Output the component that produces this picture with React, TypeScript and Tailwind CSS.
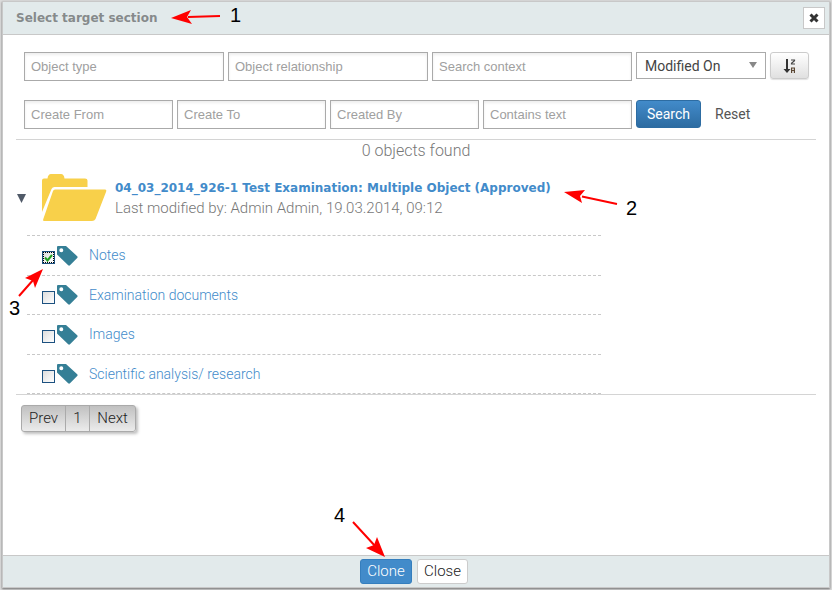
import { useState } from "react";

const sections = ["Notes", "Examination documents", "Images", "Scientific analysis/ research"];

function Field({ label }: { label: string }) {
  return (
    <input
      type="text"
      aria-label={label}
      placeholder={label}
      className="h-[29px] min-w-0 flex-1 border border-[#aaa] bg-white px-1.5 font-['Liberation_Sans',Arial,sans-serif] text-[13px] text-[#555] shadow-[inset_0_2px_3px_rgba(0,0,0,0.07)] outline-none placeholder:text-[#a0a0a0]"
    />
  );
}

function SortIcon() {
  return (
    <svg width="14" height="14" viewBox="0 0 14 14" fill="none" aria-hidden="true">
      <path d="M4 0v11" stroke="#333" strokeWidth="2" />
      <path d="M0.500 10h7L4 14z" fill="#333" />
      <path d="M8 1h3.500v.7L8.500 4.300v.7H12" stroke="#444" strokeWidth="1.200" />
      <path d="M8.600 14V9h2.800v5M8.600 11.500h2.800" stroke="#5a4632" strokeWidth="1.200" />
    </svg>
  );
}

function FolderIcon() {
  return (
    <svg width="65" height="48" viewBox="0 0 65 48" fill="#f8d04a" className="shrink-0" aria-hidden="true">
      <path d="M0 38V6.500q0-2 2-2H5.500Q6 0 9 0h10q3 0 3.500 4.500H43q2.500 0 2.500 2V13H12.500q-2 0-3 2z" />
      <path d="M13 15.500h50q2 0 1 2.500L53.500 45q-1 2-3.500 2H2.500q-2 0-1.200-2L11 17q.5-1.500 2-1.500z" />
    </svg>
  );
}

function TagIcon() {
  return (
    <svg width="21" height="20" viewBox="0 0 21 20" className="shrink-0" aria-hidden="true">
      <path fillRule="evenodd" fill="#357f96" d="M0 1Q0 0 1 0H9l11.200 10.200q.9.900 0 1.800L13 19.300q-.9.900-1.800 0L0 8.500zM4.300 2.300a2 2 0 1 0 0 4 2 2 0 0 0 0-4z" />
    </svg>
  );
}

function Annotations() {
  return (
    <svg
      width="832"
      height="590"
      viewBox="0 0 832 590"
      className="pointer-events-none absolute top-0 left-0 font-['Liberation_Sans',Arial,sans-serif] text-[20px]"
    >
      <g stroke="#f00" strokeWidth="2" fill="none">
        <path d="M220 16L188 17M617 204L582 196.500M19 296L34 279M353 522L376 547" />
      </g>
      <g fill="#f00">
        <path d="M171 18l20-8-4 7 5 7z" />
        <path d="M564 192l21-2-5 6 2 7z" />
        <path d="M43 269l-8 19-2-7-8-3z" />
        <path d="M385 557l-19-9 8-3 3-8z" />
      </g>
      <g fill="#000">
        <text x="230" y="22">1</text>
        <text x="626" y="215">2</text>
        <text x="9" y="315">3</text>
        <text x="334" y="522">4</text>
      </g>
    </svg>
  );
}

export default function App() {
  const [checked, setChecked] = useState<boolean[]>([true, false, false, false]);
  const toggle = (index: number) => setChecked(checked.map((value, i) => (i === index ? !value : value)));

  return (
    <div className="relative flex min-h-screen flex-col bg-[#dcdcdc] px-0.5 pt-px pb-0.5 font-[Roboto,'Liberation_Sans',sans-serif]">
      <section
        role="dialog"
        aria-labelledby="dialog-title"
        className="flex flex-1 flex-col border border-[#c8c8c8] bg-white shadow-[0_1px_2px_rgba(0,0,0,0.5)]"
      >
        <header className="flex h-[33px] items-center justify-between border-b border-[#c8c8c8] bg-[#e2eaeb] pr-1 pl-[13px]">
          <h1 id="dialog-title" className="font-['DejaVu_Sans',Verdana,sans-serif] text-[12px] font-bold text-[#868a8b]">
            Select target section
          </h1>
          <button type="button" aria-label="Close dialog" className="flex size-[22px] items-center justify-center border border-[#c8c8c8] bg-white">
            <svg width="10" height="10" viewBox="0 0 10 10" aria-hidden="true">
              <path d="M1.500 1.500l7 7m0-7l-7 7" stroke="#333" strokeWidth="3" />
            </svg>
          </button>
        </header>

        <main className="flex-1 px-[13px]">
          <form className="pt-[17px] pr-[7px] pl-2" onSubmit={(e) => e.preventDefault()}>
            <div className="flex gap-1">
              <div className="flex min-w-0 flex-1 gap-1">
                <Field label="Object type" />
                <Field label="Object relationship" />
                <Field label="Search context" />
              </div>
              <div className="flex w-[173px] shrink-0 gap-1">
                <div className="relative h-[27px] w-[130px]">
                  <select aria-label="Sort by" className="h-full w-full appearance-none border border-[#aaa] bg-white pt-0.5 pl-2 text-[14px] text-[#444]">
                    <option>Modified On</option>
                  </select>
                  <svg width="8" height="6" viewBox="0 0 8 6" className="pointer-events-none absolute top-2.5 right-[9px]" aria-hidden="true">
                    <path d="M0 0h8L4 6z" fill="#888" />
                  </svg>
                </div>
                <button
                  type="button"
                  aria-label="Sort descending"
                  className="flex h-[27px] flex-1 items-center justify-center rounded-[3px] border border-[#ccc] bg-linear-to-b from-white to-[#e0e0e0] shadow-[0_1px_1px_rgba(0,0,0,0.12)]"
                >
                  <SortIcon />
                </button>
              </div>
            </div>
            <div className="mt-[19px] flex gap-1">
              <div className="flex min-w-0 flex-1 gap-1">
                <Field label="Create From" />
                <Field label="Create To" />
                <Field label="Created By" />
                <Field label="Contains text" />
              </div>
              <div className="flex w-[173px] shrink-0 gap-3.5">
                <button type="submit" className="h-7 w-[65px] rounded-[3px] border border-[#2d6ca2] bg-linear-to-b from-[#428bca] to-[#2d6ca2] text-[14px] text-white">
                  Search
                </button>
                <button type="reset" className="h-7 text-[14px] text-[#555]">
                  Reset
                </button>
              </div>
            </div>
          </form>

          <div className="mt-[10px] border-y border-[#d4d4d4]">
            <p className="h-[22px] text-center text-[16px] leading-[22px] font-light text-[#777]">0 objects found</p>
            <div className="flex items-center pt-3 pb-[13px]">
              <button type="button" aria-label="Collapse examination" className="mr-4 ml-px">
                <svg width="9" height="9" viewBox="0 0 9 9" aria-hidden="true">
                  <path d="M0 0h9L4.500 9z" fill="#505a68" />
                </svg>
              </button>
              <FolderIcon />
              <div className="ml-2">
                <a href="#examination" className="block font-['DejaVu_Sans',Verdana,sans-serif] text-[12px] leading-5 font-bold text-[#428bca]">
                  04_03_2014_926-1 Test Examination: Multiple Object (Approved)
                </a>
                <p className="text-[15px] leading-5 font-light text-[#777]">Last modified by: Admin Admin, 19.03.2014, 09:12</p>
              </div>
            </div>
            <ul className="ml-[11px] max-w-[574px] border-b border-dashed border-[#c8c8c8]">
              {sections.map((name, index) => (
                <li key={name} className="relative box-content flex h-[39px] items-center border-t border-dashed border-[#c8c8c8] pl-[15px] even:h-[38px]">
                  <input
                    id={`section-${index}`}
                    type="checkbox"
                    checked={checked[index]}
                    onChange={() => toggle(index)}
                    className="peer mt-1 size-[13px] shrink-0 appearance-none border border-[#1c5180] bg-linear-to-br from-[#ddd] to-white checked:outline checked:-outline-offset-2 checked:outline-dotted checked:outline-black"
                  />
                  <svg width="9" height="8" viewBox="0 0 9 8" className="pointer-events-none invisible absolute top-[18px] left-[17px] peer-checked:visible" aria-hidden="true">
                    <path d="M1 3.500L3.500 6.500L8 1" fill="none" stroke="#21a121" strokeWidth="2" />
                  </svg>
                  <label htmlFor={`section-${index}`} className="ml-0.5 flex items-center gap-[11px] text-[14px] font-light text-[#428bca]">
                    <TagIcon />
                    {name}
                  </label>
                </li>
              ))}
            </ul>
          </div>

          <nav
            aria-label="Pages"
            className="mt-2.5 ml-[5px] flex w-fit divide-x divide-[#aaa] rounded-[3px] border border-[#aaa] bg-linear-to-b from-[#c0c0c0] to-[#ececec] text-[15px] font-light text-[#222] shadow-[2px_2px_3px_rgba(0,0,0,0.25)]"
          >
            <button type="button" className="h-[25px] w-11">Prev</button>
            <button type="button" className="h-[25px] w-6">1</button>
            <button type="button" className="h-[25px] w-[45px]">Next</button>
          </nav>
        </main>

        <footer className="flex h-8 items-center justify-center gap-[5px] border-t border-[#c8c8c8] bg-[#e2eaeb] pr-1 text-[15px] font-light">
          <button type="button" className="h-[25px] w-[52px] rounded-[3px] border border-[#357ebd] bg-[#428bca] text-white">Clone</button>
          <button type="button" className="h-[25px] w-[51px] rounded-[3px] border border-[#ccc] bg-white text-[#222]">Close</button>
        </footer>
      </section>
      <Annotations />
    </div>
  );
}
